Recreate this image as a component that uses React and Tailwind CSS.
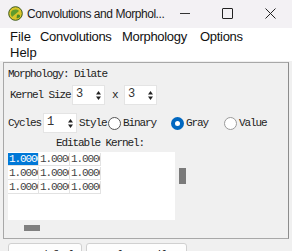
import React from 'react';

const mono = { fontFamily: '"Liberation Mono", "DejaVu Sans Mono", monospace' };

function Spinner({ value, className = '' }) {
  return (
    <div className={`relative h-[20px] bg-white border border-[#e4e4e4] ${className}`}>
      <span className="absolute left-[3px] top-[1px] text-[12px] leading-[14px] text-[#333]">{value}</span>
      <svg className="absolute right-[3px] top-[5px]" width="5" height="9" viewBox="0 0 5 9">
        <path d="M2.5 0 L5 3.5 L0 3.5 Z" fill="#222" />
        <path d="M2.5 9 L5 5.5 L0 5.5 Z" fill="#222" />
      </svg>
    </div>
  );
}

function Radio({ checked, light, label }) {
  return (
    <div className="flex items-center gap-[2px]">
      {checked ? (
        <span className="w-[13px] h-[13px] rounded-full bg-[#0067c0] flex items-center justify-center">
          <span className="w-[5px] h-[5px] rounded-full bg-white" />
        </span>
      ) : (
        <span className={`w-[13px] h-[13px] rounded-full bg-white border ${light ? 'border-[#9a9a9a]' : 'border-[#555]'}`} />
      )}
      <span>{label}</span>
    </div>
  );
}

export default function App() {
  const rows = [0, 1, 2];
  const cols = [0, 1, 2];
  return (
    <div className="w-[292px] h-[251px] overflow-hidden bg-[#f0f0f0] flex flex-col" style={{ fontFamily: '"Liberation Sans", Arial, sans-serif' }}>
      {/* Title bar */}
      <div className="h-[28px] shrink-0 bg-[#f3f1f4] flex items-center relative text-[#1b1b1b]">
        <svg className="absolute left-[8px] top-[6px]" width="15" height="15" viewBox="0 0 15 15">
          <circle cx="7.5" cy="7.5" r="6.8" fill="#d9c52a" stroke="#3d5a1a" strokeWidth="1" />
          <path d="M3 6 C5 3, 9 3, 11 5 C9 7, 6 9, 4 11 C3 9, 2.5 8, 3 6 Z" fill="#5e9b2c" />
          <path d="M9 9 C11 8, 12.5 9, 12 11 C11 12, 9.5 12.5, 8.5 12 Z" fill="#4c8a25" />
        </svg>
        <span className="absolute left-[27px] top-[5px] text-[12px] leading-[18px] tracking-[-0.45px] whitespace-nowrap">Convolutions and Morphol...</span>
        <span className="absolute left-[180px] top-[13px] w-[10px] h-px bg-[#333]" />
        <span className="absolute left-[222px] top-[8px] w-[11px] h-[11px] border border-[#222] rounded-[1px]" />
        <svg className="absolute left-[265px] top-[8px]" width="11" height="11" viewBox="0 0 11 11">
          <path d="M0.5 0.5 L10.5 10.5 M10.5 0.5 L0.5 10.5" stroke="#222" strokeWidth="1" />
        </svg>
      </div>

      {/* Menu */}
      <div className="bg-white h-[33px] shrink-0 text-[13px] leading-[17px] text-[#111] pl-[10px]">
        <div className="flex h-[16px] items-center whitespace-nowrap">
          <span className="w-[30px] shrink-0">File</span>
          <span className="w-[82px] shrink-0 tracking-[-0.3px]">Convolutions</span>
          <span className="w-[78px] shrink-0 tracking-[-0.3px]">Morphology</span>
          <span className="tracking-[-0.3px]">Options</span>
        </div>
        <div className="flex h-[17px] items-center">
          <span>Help</span>
        </div>
      </div>

      {/* Body */}
      <div className="flex-1 pl-[3px] pr-[3px] pt-px">
        <div className="h-[177px] border border-[#a8a8a8] border-r-[#8c8c8c] flex flex-col text-[11px] text-[#222]" style={mono}>
          <div className="h-[19px] flex items-end pl-[4px] tracking-[-1.1px] leading-[12px] pb-[2px]">Morphology: Dilate</div>
          <div className="flex items-center h-[22px] mt-[2px] pl-[6px] tracking-[-1.1px]">
            <span className="w-[62px]">Kernel Size</span>
            <Spinner value="3" className="w-[33px]" />
            <span className="ml-[7px] w-[12px]">x</span>
            <Spinner value="3" className="w-[33px]" />
          </div>
          <div className="flex items-center h-[22px] mt-[6px] pl-[4px] tracking-[-1.1px]">
            <span className="w-[35px]">Cycles</span>
            <Spinner value="1" className="w-[34px]" />
            <span className="ml-[2px] w-[29px]">Style</span>
            <div className="w-[63px]"><Radio label="Binary" /></div>
            <div className="w-[53px]"><Radio checked label="Gray" /></div>
            <Radio light label="Value" />
          </div>
          <div className="h-[12px] mt-[3px] pl-[52px] leading-[12px] tracking-[-1.1px]">Editable Kernel:</div>
          <div className="flex items-start mt-[3px] pl-[4px]">
            <div className="w-[167px] h-[68px] bg-white pt-px">
              {rows.map(r => (
                <div key={r} className="flex h-[14px]">
                  {cols.map(c => {
                    const sel = r === 0 && c === 0;
                    return (
                      <div
                        key={c}
                        className={`w-[31px] h-[13px] overflow-hidden whitespace-nowrap border-r border-b border-[#e2e2e2] pl-px leading-[13px] tracking-[-1.1px] ${sel ? 'bg-[#0078d7] text-white' : 'text-[#444]'}`}
                      >
                        1.0000
                      </div>
                    );
                  })}
                </div>
              ))}
            </div>
            <div className="ml-[4px] mt-[16px] w-[7px] h-[16px] bg-[#7a7a7a]" />
          </div>
          <div className="ml-[20px] mt-[5px] w-[16px] h-[6px] bg-[#808080]" />
        </div>
        <div className="flex gap-[4px] mt-[4px] pl-[5px] text-[11px] text-[#222]" style={mono}>
          <div className="w-[74px] h-[20px] bg-[#fdfdfd] border border-[#d0d0d0] rounded-[3px] pl-[10px] pt-[3px] tracking-[-1.1px] whitespace-nowrap overflow-hidden">Set default</div>
          <div className="w-[101px] h-[20px] bg-[#fdfdfd] border border-[#d0d0d0] rounded-[3px] pl-[14px] pt-[3px] tracking-[-1.1px] whitespace-nowrap overflow-hidden">Apply To File</div>
        </div>
      </div>
    </div>
  );
}
